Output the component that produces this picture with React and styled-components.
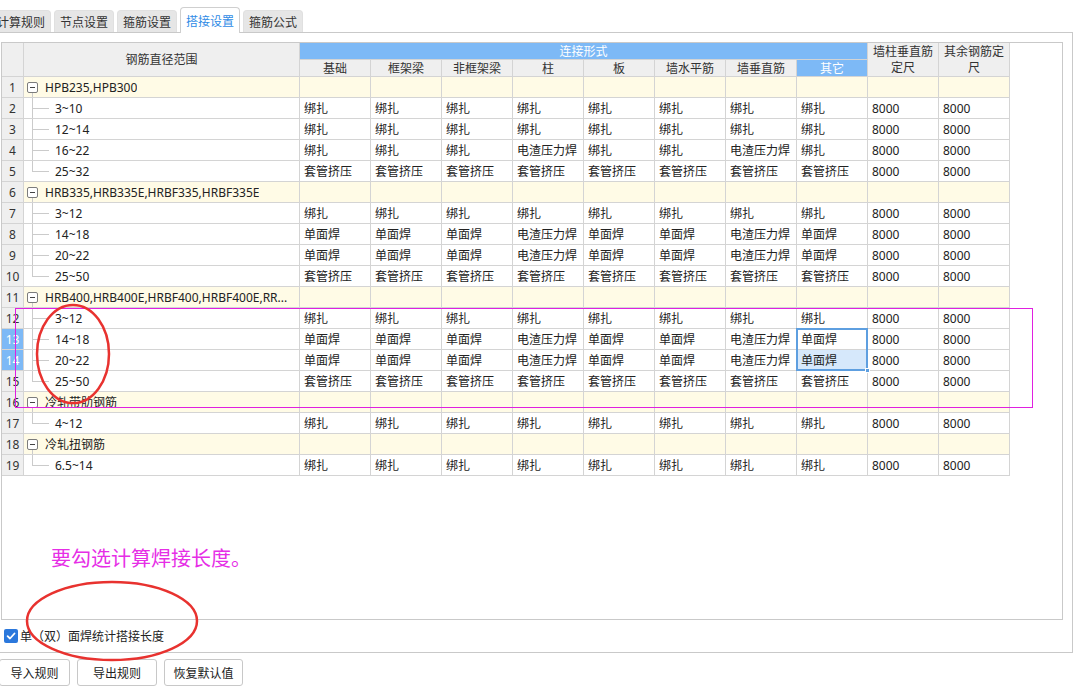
import React from 'react';
import styled, { createGlobalStyle, css } from 'styled-components';

const GlobalStyle = createGlobalStyle`
  * { box-sizing: border-box; }
  html, body { margin: 0; padding: 0; background: #fff; }
  body {
    width: 1079px; height: 687px; overflow: hidden; position: relative;
    font-family: "Noto Sans", "Noto Sans CJK SC", sans-serif;
    font-size: 12px; color: #222;
  }
`;

const LINE = '#d4d4d4';
const BLUE = '#7db9f6';

const Page = styled.div`
  width: 1079px;
  height: 687px;
  position: relative;
`;

const TabBar = styled.div`
  display: flex;
  align-items: flex-end;
  gap: 3px;
  height: 32px;
  margin-left: -9px;
`;

const Tab = styled.div`
  width: 60px;
  height: ${p => (p.$active ? 26 : 22)}px;
  display: flex;
  align-items: center;
  justify-content: center;
  padding-top: 1px;
  border-radius: 4px 4px 0 0;
  background: ${p => (p.$active ? '#fff' : '#e6e6e6')};
  border: 1px solid ${p => (p.$active ? '#cfcfcf' : '#e0e0e0')};
  border-bottom: none;
  color: ${p => (p.$active ? '#2f8be6' : '#333')};
  font-size: 12px;
  margin-bottom: ${p => (p.$active ? -1 : 0)}px;
  position: relative;
  z-index: ${p => (p.$active ? 1 : 0)};
`;

const Outer = styled.div`
  margin-left: -1px;
  width: 1074px;
  height: 621px;
  border: 1px solid #c9c9c9;
  padding: 9px 9px 0 1px;
  display: flex;
  flex-direction: column;
`;

const Inner = styled.div`
  height: 578px;
  border: 1px solid #c9c9c9;
  background: #fff;
  position: relative;
`;

const Grid = styled.div`
  display: grid;
  grid-template-columns: 22px 276px repeat(10, 71px);
  grid-template-rows: 17px 17px repeat(19, 21px);
  width: 1008px;
`;

const Cell = styled.div`
  border-right: 1px solid ${LINE};
  border-bottom: 1px solid ${LINE};
  padding: 1px 4px 0;
  line-height: 19px;
  white-space: nowrap;
  overflow: hidden;
  background: ${p => (p.$group ? '#fffbe6' : p.$light ? '#d6e8fb' : '#fff')};
  ${p => p.$sel && css`
    position: relative;
    overflow: visible;
    z-index: 2;
  `}
`;

const HeadCell = styled.div`
  border-right: 1px solid ${LINE};
  border-bottom: 1px solid ${LINE};
  background: ${p => (p.$blue ? BLUE : '#efefef')};
  color: ${p => (p.$blue ? '#fff' : '#333')};
  display: flex;
  align-items: center;
  justify-content: center;
  text-align: center;
  line-height: 16px;
  padding-top: 1px;
  font-size: 12px;
  grid-row: ${p => p.$row || 'auto'};
  grid-column: ${p => p.$col || 'auto'};
`;

const NumCell = styled.div`
  border-right: 1px solid ${LINE};
  border-bottom: 1px solid ${LINE};
  background: ${p => (p.$hi ? BLUE : '#efefef')};
  color: ${p => (p.$hi ? '#fff' : '#333')};
  text-align: center;
  padding-top: 1px;
  line-height: 19px;
`;

const RangeCell = styled.div`
  position: relative;
  border-right: 1px solid ${LINE};
  border-bottom: 1px solid ${LINE};
  background: ${p => (p.$group ? '#fffbe6' : '#fff')};
  line-height: 19px;
  white-space: nowrap;
  overflow: hidden;
  display: flex;
  align-items: center;
  padding-top: 1px;
  padding-left: ${p => (p.$group ? 3 : 31)}px;
  &::before {
    content: '';
    position: absolute;
    left: 8px;
    border-left: 1px solid #cbcbcb;
    ${p => p.$group
      ? css`top: 16px; bottom: -1px;`
      : css`top: -1px; bottom: ${p.$last ? '50%' : '-1px'};`}
  }
  ${p => !p.$group && css`
    &::after {
      content: '';
      position: absolute;
      left: 8px;
      top: 50%;
      width: 17px;
      border-top: 1px solid #cbcbcb;
    }
  `}
`;

const Toggle = styled.span`
  width: 11px;
  height: 11px;
  border: 1px solid #7c7c7c;
  border-radius: 2px;
  background: #fff;
  margin-right: 7px;
  margin-top: -1px;
  position: relative;
  flex: none;
  &::before {
    content: '';
    position: absolute;
    left: 2px;
    right: 2px;
    top: 4px;
    border-top: 1px solid #444;
  }
`;

const Label = styled.span`
  overflow: hidden;
  white-space: nowrap;
`;

const SelFrame = styled.span`
  position: absolute;
  left: -1px;
  top: -1px;
  width: 72px;
  height: 43px;
  border: 2px solid #5e9fe0;
  pointer-events: none;
`;

const Handle = styled.span`
  position: absolute;
  right: -4px;
  bottom: -4px;
  width: 5px;
  height: 5px;
  background: #5e9fe0;
  border: 1px solid #fff;
`;

const CheckRow = styled.div`
  height: 32px;
  display: flex;
  align-items: center;
  padding-left: 3px;
  gap: 2px;
  font-size: 12px;
  color: #222;
`;

const CheckBox = styled.span`
  width: 14px;
  height: 14px;
  border-radius: 2px;
  background: #2b78dc;
  display: inline-flex;
  align-items: center;
  justify-content: center;
`;

const ButtonRow = styled.div`
  display: flex;
  gap: 7px;
  margin-top: 6px;
  margin-left: -1px;
`;

const Button = styled.button`
  width: ${p => p.$w}px;
  height: 27px;
  background: #fff;
  border: 1px solid #c8c8c8;
  border-radius: 3px;
  font-family: "Noto Sans", "Noto Sans CJK SC", sans-serif;
  font-size: 12px;
  color: #222;
  padding: 0;
`;

const Overlay = styled.svg`
  position: absolute;
  left: 0;
  top: 0;
  pointer-events: none;
  z-index: 5;
`;

const Note = styled.div`
  position: absolute;
  left: 51px;
  top: 543px;
  font-size: 20px;
  color: #e62ee6;
  font-family: "Noto Sans CJK SC", sans-serif;
  z-index: 5;
`;

const B = '绑扎', D = '单面焊', Z = '电渣压力焊', T = '套管挤压';
const b8 = [B, B, B, B, B, B, B, B];
const bz = [B, B, B, Z, B, B, Z, B];
const t8 = [T, T, T, T, T, T, T, T];
const dz = [D, D, D, Z, D, D, Z, D];

const rows = [
  { g: 'HPB235,HPB300' },
  { r: '3~10', v: b8 },
  { r: '12~14', v: b8 },
  { r: '16~22', v: bz },
  { r: '25~32', v: t8, last: true },
  { g: 'HRB335,HRB335E,HRBF335,HRBF335E' },
  { r: '3~12', v: b8 },
  { r: '14~18', v: dz },
  { r: '20~22', v: dz },
  { r: '25~50', v: t8, last: true },
  { g: 'HRB400,HRB400E,HRBF400,HRBF400E,RR...' },
  { r: '3~12', v: b8 },
  { r: '14~18', v: dz },
  { r: '20~22', v: dz },
  { r: '25~50', v: t8, last: true },
  { g: '冷轧带肋钢筋' },
  { r: '4~12', v: b8, last: true },
  { g: '冷轧扭钢筋' },
  { r: '6.5~14', v: b8, last: true },
];

const subHeads = ['基础', '框架梁', '非框架梁', '柱', '板', '墙水平筋', '墙垂直筋', '其它'];
const tabs = ['计算规则', '节点设置', '箍筋设置', '搭接设置', '箍筋公式'];

export default function App() {
  return (
    <Page>
      <GlobalStyle />
      <TabBar>
        {tabs.map(t => (
          <Tab key={t} $active={t === '搭接设置'}>{t}</Tab>
        ))}
      </TabBar>
      <Outer>
        <Inner>
          <Grid>
            <HeadCell $row="1 / span 2" $col="1" />
            <HeadCell $row="1 / span 2" $col="2">钢筋直径范围</HeadCell>
            <HeadCell $row="1" $col="3 / span 8" $blue>连接形式</HeadCell>
            <HeadCell $row="1 / span 2" $col="11">墙柱垂直筋<br />定尺</HeadCell>
            <HeadCell $row="1 / span 2" $col="12">其余钢筋定<br />尺</HeadCell>
            {subHeads.map((h, i) => (
              <HeadCell key={h} $row="2" $col={String(3 + i)} $blue={h === '其它'}>{h}</HeadCell>
            ))}
            {rows.map((row, i) => {
              const n = i + 1;
              const hi = n === 13 || n === 14;
              if (row.g) {
                return (
                  <React.Fragment key={n}>
                    <NumCell>{n}</NumCell>
                    <RangeCell $group>
                      <Toggle />
                      <Label>{row.g}</Label>
                    </RangeCell>
                    {Array.from({ length: 10 }).map((_, k) => (
                      <Cell key={k} $group />
                    ))}
                  </React.Fragment>
                );
              }
              return (
                <React.Fragment key={n}>
                  <NumCell $hi={hi}>{n}</NumCell>
                  <RangeCell $last={row.last}>{row.r}</RangeCell>
                  {row.v.map((v, k) => (
                    <Cell key={k} $sel={n === 13 && k === 7} $light={n === 14 && k === 7}>
                      {v}
                      {n === 13 && k === 7 && (
                        <SelFrame>
                          <Handle />
                        </SelFrame>
                      )}
                    </Cell>
                  ))}
                  <Cell>8000</Cell>
                  <Cell>8000</Cell>
                </React.Fragment>
              );
            })}
          </Grid>
        </Inner>
        <CheckRow>
          <CheckBox>
            <svg width="10" height="10" viewBox="0 0 10 10">
              <path d="M1.6 5.2 L4 7.5 L8.5 2.5" fill="none" stroke="#fff" strokeWidth="1.8" strokeLinecap="round" strokeLinejoin="round" />
            </svg>
          </CheckBox>
          <span>单（双）面焊统计搭接长度</span>
        </CheckRow>
      </Outer>
      <ButtonRow>
        <Button $w={71}>导入规则</Button>
        <Button $w={80}>导出规则</Button>
        <Button $w={79}>恢复默认值</Button>
      </ButtonRow>
      <Note>要勾选计算焊接长度。</Note>
      <Overlay width="1079" height="687" viewBox="0 0 1079 687">
        <rect x="15.5" y="308.5" width="1017" height="99" fill="none" stroke="#e020e0" strokeWidth="1" />
        <ellipse cx="73" cy="354" rx="36" ry="49" fill="none" stroke="#e8322f" strokeWidth="2.5" />
        <ellipse cx="112" cy="621" rx="85" ry="39" fill="none" stroke="#e8322f" strokeWidth="2.5" />
      </Overlay>
    </Page>
  );
}
